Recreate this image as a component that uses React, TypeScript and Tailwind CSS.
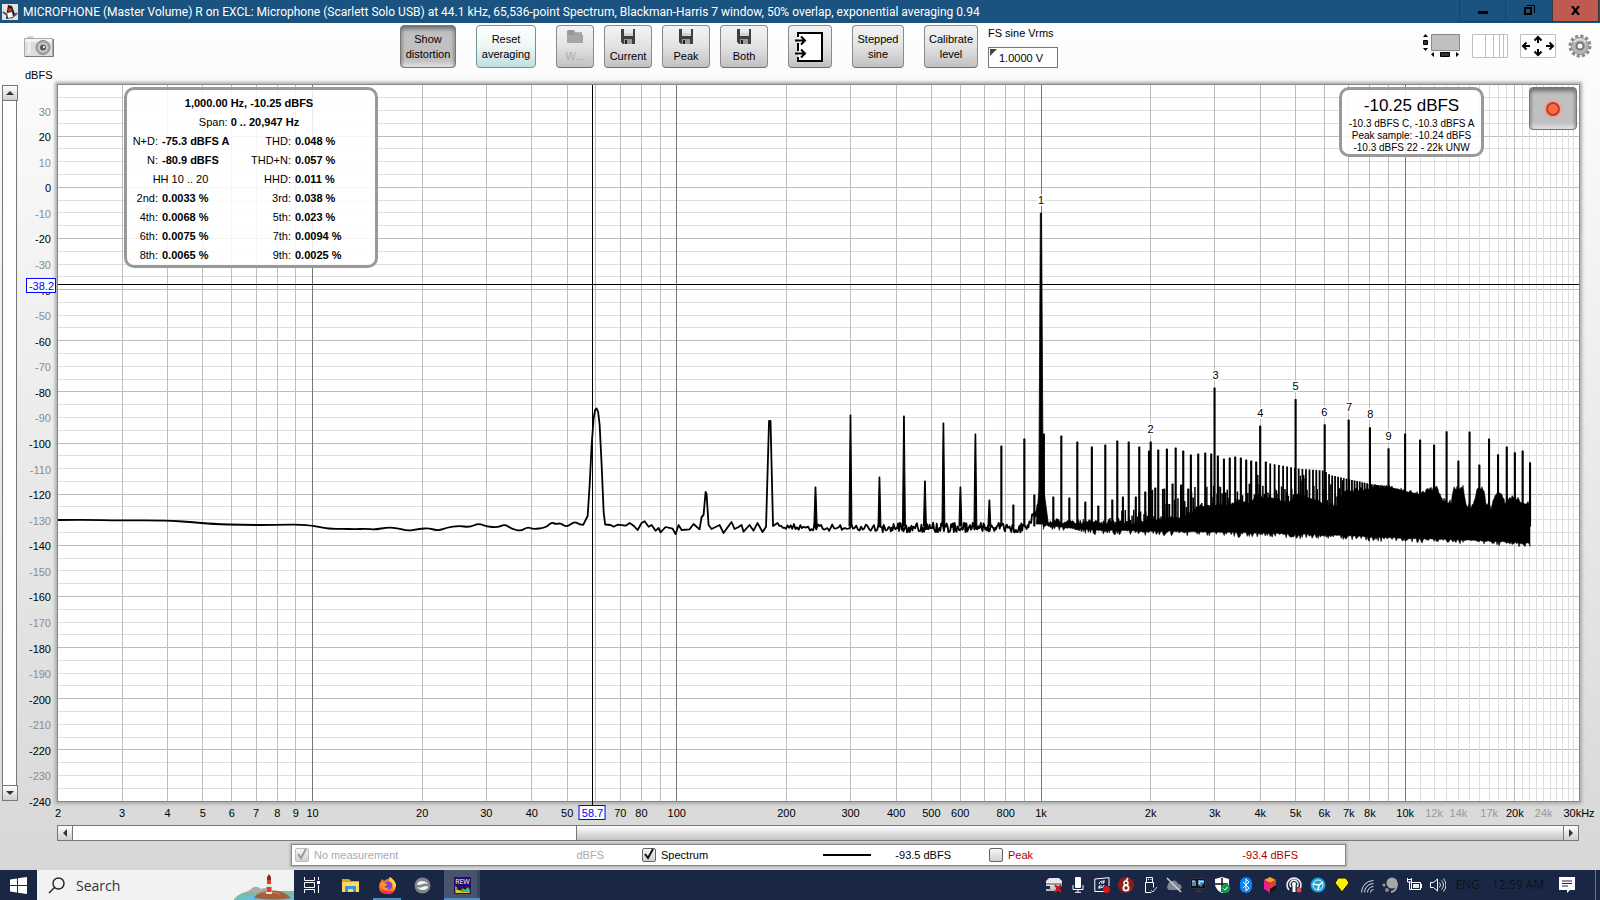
import { useState } from "react";
import type { ReactNode } from "react";

type Point = [number, number];

const F_MIN = 2;
const F_MAX = 30000;
const DB_MAX = 40;
const DB_MIN = -240;

const fx = (f: number) =>
  `${(Math.log(f / F_MIN) / Math.log(F_MAX / F_MIN)) * 100}%`;
const dy = (db: number) => `${((DB_MAX - db) / (DB_MAX - DB_MIN)) * 100}%`;

// x position in trace units for a frequency
const tx = (f: number) => 57 + 364.45 * Math.log10(f / F_MIN);

const range = (from: number, to: number, step: number) => {
  const out: number[] = [];
  for (let v = from; v <= to; v += step) out.push(v);
  return out;
};

const freqLines = [
  ...range(3, 9, 1),
  ...range(20, 90, 10),
  ...range(200, 900, 100),
  ...range(2000, 9000, 1000),
  20000,
];
const minorFreqLines = range(11000, 29000, 1000).filter((f) => f !== 20000);
const decadeLines = [10, 100, 1000, 10000];

const freqLabels: [number, string, boolean?][] = [
  [2, "2"], [3, "3"], [4, "4"], [5, "5"], [6, "6"], [7, "7"], [8, "8"],
  [9, "9"], [10, "10"], [20, "20"], [30, "30"], [40, "40"], [50, "50"],
  [70, "70"], [80, "80"], [100, "100"], [200, "200"], [300, "300"],
  [400, "400"], [500, "500"], [600, "600"], [800, "800"], [1000, "1k"],
  [2000, "2k"], [3000, "3k"], [4000, "4k"], [5000, "5k"], [6000, "6k"],
  [7000, "7k"], [8000, "8k"], [10000, "10k"], [12000, "12k", true],
  [14000, "14k", true], [17000, "17k", true], [20000, "20k"],
  [24000, "24k", true], [30000, "30kHz"],
];

const harmonics: [number, number, string][] = [
  [1000, -6.7, "1"], [2000, -96.2, "2"], [3015, -75, "3"], [4000, -90, "4"],
  [5000, -79.4, "5"], [6000, -89.6, "6"], [7015, -87.6, "7"],
  [8015, -90.2, "8"], [9000, -99, "9"],
];

const lowTrace: Point[] = [
  [57, 520], [82, 519.7], [120, 520.4], [166, 520.5], [189, 522], [212, 524],
  [243, 525], [275, 525], [304, 524.3], [323, 528], [333, 529], [342, 528.7],
  [354, 529.3], [365, 528.7], [374, 529.7], [387, 527.3], [398, 528.3],
  [407, 531], [419, 528.7], [428, 528.3], [438, 530.7], [446, 527.7],
  [458, 525.7], [469, 527.3], [478, 523.3], [486, 526.7], [497, 527.3],
  [504, 524.3], [511, 528.7], [520, 531.3], [527, 526.7], [532, 529.3],
  [545, 527.7], [551, 522], [555, 524.3], [560, 523], [566, 527.3],
  [574, 521.3], [579, 524.7], [586, 525],
];

const midTrace: Point[] = [
  [587, 516], [589, 485], [591, 445], [593, 418], [594.5, 410], [596, 408.5],
  [597.5, 412], [599, 425], [601, 465], [603, 512], [604.5, 524.5], [610, 525],
  [613, 526.7], [617, 524.7], [625, 525.7], [629, 523], [633, 525.7],
  [637, 530], [641, 523], [644, 521.3], [648, 526.7], [651, 525], [655, 530.7],
  [658, 528], [660, 532.3], [665, 527], [672, 528.7], [675, 534], [678, 525],
  [681, 530], [689, 529.3], [693, 524], [699, 529.3], [701, 517], [703, 515],
  [705, 492], [706, 494], [708, 525], [711, 529], [719, 525], [723, 533],
  [728, 526], [731, 522], [734, 529], [738, 527], [741, 525], [743, 531.7],
  [749, 525], [753, 530.7], [757, 523], [762, 532], [765.5, 526.7],
  [768.500, 421], [770, 421], [772.500, 526], [777, 523],
];

const peaks: Point[] = [
  [815, 487], [850, 415], [879, 477], [903.5, 416], [924.5, 481], [943, 423],
  [960, 487], [975, 434], [989, 500], [1001, 446], [1013, 505], [1024, 439],
  [1034, 495], [1043.5, 434], [1053, 497], [1061, 436], [1069, 498],
  [1077, 442], [1085, 502], [1091.5, 447], [1098, 506], [1105, 445],
  [1112, 500], [1117, 441], [1122.6, 497], [1128.4, 442], [1135.5, 497],
  [1139, 447], [1145, 492], [1148.7, 451], [1150.4, 442], [1155, 488],
  [1158, 450], [1164, 489], [1166.6, 449], [1172.3, 484], [1175.4, 448],
  [1180.8, 485], [1183, 451], [1188, 489], [1190.6, 455], [1198, 454],
  [1205, 453], [1211, 454], [1214.3, 388], [1217.6, 456], [1223.7, 459],
  [1229.5, 458], [1235, 457], [1240.6, 458], [1246, 460], [1251, 461],
  [1256, 462], [1260, 426], [1265.6, 462], [1295.4, 399.6], [1324.5, 424.7],
  [1348.5, 420], [1369.8, 427.7], [1388.4, 448.7], [1405, 434], [1420, 440],
  [1434, 445], [1446.5, 431.7], [1458.3, 461], [1469.5, 432], [1479.3, 465],
  [1489, 439], [1498, 454.7], [1506.7, 447], [1514.8, 452.7], [1522.6, 451],
  [1530, 462.7],
];

const combTop: Point[] = [
  [1268, 463], [1297, 468.5], [1324, 470.5], [1330, 475], [1343, 478],
  [1357, 481], [1370, 484], [1390, 487], [1405, 491], [1420, 494.5],
  [1430, 494],
];

const bodyTop: Point[] = [
  [1045, 521], [1130, 523], [1180, 518], [1200, 507], [1230, 504],
  [1250, 503], [1256, 497], [1275, 500], [1290, 502], [1297, 494],
  [1310, 500], [1320, 503], [1336, 507], [1345, 492], [1375, 487],
  [1390, 488], [1405, 492], [1420, 495], [1427, 491], [1437, 488],
  [1442, 500], [1451, 503], [1454, 489], [1463, 487], [1466, 505],
  [1473, 507], [1477, 490], [1483, 489], [1486, 503], [1491, 508],
  [1495, 495], [1500, 494], [1505, 503], [1508, 498], [1517, 498],
  [1522, 505], [1527, 503], [1531, 502],
];

const bodyBottom: Point[] = [
  [1045, 526], [1060, 528], [1100, 531], [1165, 532], [1267, 534],
  [1334, 536], [1402, 539], [1470, 541], [1531, 544],
];

const interpolate = (points: Point[], x: number) => {
  const i = points.findIndex((p) => p[0] >= x);
  if (i === -1) return points[points.length - 1][1];
  if (i === 0) return points[0][1];
  const [x0, y0] = points[i - 1];
  const [x1, y1] = points[i];
  return y0 + ((y1 - y0) * (x - x0)) / (x1 - x0);
};

const makeRandom = (seed: number) => () => {
  seed = (seed * 1664525 + 1013904223) % 4294967296;
  return seed / 4294967296;
};

const buildTraces = () => {
  const random = makeRandom(77);

  const noise: Point[] = [];
  for (let x = 779; x < 1046; x += x < 880 ? 1.6 : 0.9) {
    const spread = x < 880 ? 7 : 10;
    const skirt = x > 1025 ? Math.max(0, 22 - Math.abs(x - 1040) * 1.5) : 0;
    noise.push([x, 527.5 - skirt + (random() - 0.5) * spread]);
  }
  const toLine = (pts: Point[]) =>
    pts.map(([x, y]) => `${x.toFixed(1)} ${y.toFixed(1)}`).join("L");

  // smooth the slow left part with midpoint quadratics
  let smooth = `M${lowTrace[0].join(" ")}`;
  for (let i = 1; i < lowTrace.length - 1; i++) {
    const [x, y] = lowTrace[i];
    const [nx, ny] = lowTrace[i + 1];
    smooth += `Q${x} ${y} ${(x + nx) / 2} ${(y + ny) / 2}`;
  }
  const line = `${smooth}L${toLine(midTrace)}L${toLine(noise)}`;

  let spikes = "";
  for (const [x, y] of peaks) {
    const half = x < 820 ? 1.6 : x < 1000 ? 1.4 : 0.5;
    const width = x < 1000 ? 0.3 : 0.5;
    spikes += `M${x - half} 526L${x - width} ${y}L${x + width} ${y}L${x + half} 526Z`;
  }

  let comb = "";
  for (let f = 4260; f < 11800; f += 120) {
    const x = tx(f);
    comb += `M${x.toFixed(1)} 526V${interpolate(combTop, x).toFixed(1)}`;
  }

  let minor = "";
  for (let x = 1108; x < 1345; x += 1.7) {
    const lift = x < 1150 ? 24 : x < 1200 ? 32 : 24;
    const base = interpolate(bodyTop, x);
    minor += `M${x.toFixed(1)} 526V${(base - Math.pow(random(), 2.5) * lift).toFixed(1)}`;
  }

  const top: Point[] = [];
  const bottom: Point[] = [];
  for (let x = 1043; x <= 1530; x += 1) {
    top.push([x, interpolate(bodyTop, x) + (random() - 0.6) * 5]);
    bottom.unshift([
      x,
      interpolate(bodyBottom, x) + Math.pow(random(), 3) * 5 - 1,
    ]);
  }
  const body = `M${toLine(top)}L${toLine(bottom)}Z`;

  return { line, spikes, comb, minor, body };
};

const traces = buildTraces();

const raised =
  "rounded-[4px] border border-[#8a8a8a] border-b-[#6c6c6c] bg-linear-to-b from-[#f4f4f4] via-[#e2e2e2] to-[#c2c2c2]";
const sunken =
  "rounded-[4px] border border-[#777] bg-[#c0c0c0] shadow-[inset_0_3px_4px_#6f6f6f,inset_0_-3px_4px_#e8e8e8,inset_2px_0_2px_#999,inset_-2px_0_2px_#999]";
const frameShadow = "shadow-[0_0_0_1px_#888,0_0_3px_3px_#aaa]";

const FloppyIcon = () => (
  <svg width="16" height="16" viewBox="0 0 16 16">
    <path d="M1 0h14v15H3l-2-2z" fill="#3f3f3f" />
    <path d="M4 0h9v7H4z" fill="#cfd3d6" />
    <path d="M4 1h9M4 3h9" stroke="#fff" />
    <path d="M4 10h8v5H4z" fill="#9a9a9a" />
    <path d="M5 11h2v4H5z" fill="#222" />
  </svg>
);

const FolderIcon = () => (
  <svg width="18" height="16" viewBox="0 0 18 16">
    <path d="M1 2l1-1h6l1 2h7v10H1z" fill="#9b9b9b" />
    <path d="M1 6h16v8H1z" fill="#a6a6a6" />
    <path d="M9 4h7" stroke="#c4c4c4" />
  </svg>
);

const Toolbar = () => {
  const [vrms, setVrms] = useState("1.0000 V");
  return (
    <header className="flex h-[62px] shrink-0 items-start pt-[2px] pr-2">
      <div className="mr-[2px] flex w-1/4 shrink-0 flex-col gap-[9px] pt-[11px] pl-6">
        <button type="button" aria-label="Capture" className="w-[30px]">
          <svg width="30" height="22" viewBox="0 0 30 22">
            <path d="M4 2V1h5v1" stroke="#bbb" fill="#ddd" />
            <path d="M.5 2.5h28v18H.5z" fill="#dcdcdc" stroke="#aaa" />
            <path d="M1 3h27v3H1z" fill="#f2f2f2" />
            <path d="M1 20.500h28.500V3" stroke="#777" fill="none" />
            <path d="M3 5q4 7 0 13M6 4v14" stroke="#fafafa" fill="none" />
            <circle cx="19" cy="11.500" r="7" fill="#a5a5a5" stroke="#888" />
            <circle cx="19" cy="11.500" r="5" fill="#c9c9c9" />
            <circle cx="19" cy="11.500" r="3" fill="#555" />
            <circle cx="20" cy="11" r="1.200" fill="#cfe8d8" />
          </svg>
        </button>
        <span className="pl-px text-[11px] leading-4">dBFS</span>
      </div>
      <div className="flex h-[43px] text-[11px] leading-[15px]">
        <button type="button" className={sunken + " w-14"}>
          Show
          <br />
          distortion
        </button>
        <button
          type="button"
          className="ml-5 w-[60px] rounded-[4px] border border-[#6f9494] bg-linear-to-b from-white via-[#edf6f6] to-[#bfdfdf]"
        >
          Reset
          <br />
          averaging
        </button>
        <button
          type="button"
          disabled
          className={raised + " ml-5 flex w-[38px] flex-col items-center justify-center gap-1 text-[#aaa]"}
        >
          <FolderIcon />
          W...
        </button>
        {["Current", "Peak", "Both"].map((name) => (
          <button
            key={name}
            type="button"
            className={raised + " ml-[10px] flex w-12 flex-col items-center justify-center gap-1"}
          >
            <FloppyIcon />
            {name}
          </button>
        ))}
        <button
          type="button"
          aria-label="Input range"
          className={raised + " ml-5 flex w-11 items-center justify-center"}
        >
          <svg width="30" height="32" viewBox="0 0 30 32">
            <path d="M3 6V2h24v28H3v-4M3 12v8" fill="#fff" stroke="#000" strokeWidth="2" />
            <path d="M0 9.500h9M0 22.500h9M6 5.500l4 4-4 4M6 18.500l4 4-4 4" fill="none" stroke="#000" strokeWidth="2" />
          </svg>
        </button>
        <button type="button" className={raised + " ml-5 w-[52px]"}>
          Stepped
          <br />
          sine
        </button>
        <button type="button" className={raised + " ml-5 w-[54px]"}>
          Calibrate
          <br />
          level
        </button>
        <div className="relative ml-[10px] flex flex-col gap-[6px] pt-px">
          <label htmlFor="vrms">FS sine Vrms</label>
          <input
            id="vrms"
            value={vrms}
            onChange={(e) => setVrms(e.target.value)}
            className="h-[21px] w-[70px] border border-[#777] bg-white pl-[10px]"
          />
          <svg className="absolute top-6 left-[2px]" width="7" height="7">
            <path d="M0 0h7L0 7z" fill="#444" />
          </svg>
        </div>
      </div>
      <div className="ml-auto flex items-start gap-3 pt-2">
        <button type="button" aria-label="Scrollbars">
          <svg width="37" height="25" viewBox="0 0 37 25">
            <path d="M8.500 1.500h28v16h-28z" fill="#c0c0c0" stroke="#888" />
            <path d="M0 4l2.500-3L5 4zM0 15l2.500 3L5 15z" />
            <path d="M.5 7.500h4v4h-4zM17.500 19.500h9v4h-9z" fill="#333" stroke="#000" />
            <path d="M11 19v5l-3-2.500zM33 19v5l3-2.500z" />
          </svg>
        </button>
        <button type="button" aria-label="Frequency axis">
          <svg width="36" height="25" viewBox="0 0 36 25">
            <path d="M.5 1.500h35v23H.5z" fill="#fff" stroke="#c0c0c0" />
            <path d="M13.500 1v23M21.500 1v23M27.500 1v23M31.500 1v23" stroke="#c0c0c0" />
          </svg>
        </button>
        <button type="button" aria-label="Graph limits">
          <svg width="36" height="25" viewBox="0 0 36 25">
            <path d="M.5 1.500h35v23H.5z" fill="#fff" stroke="#c0c0c0" />
            <path
              d="M18 10V4M14.500 7.500L18 4l3.500 3.500M18 16v6M14.500 18.500L18 22l3.500-3.500M10 13H3M6.500 9.500L3 13l3.500 3.500M26 13h7M29.500 9.500L33 13l-3.500 3.500"
              fill="none"
              stroke="#000"
              strokeWidth="2"
            />
          </svg>
        </button>
        <button type="button" aria-label="Settings">
          <svg width="24" height="25" viewBox="0 0 24 25">
            <circle cx="12" cy="13" r="10" fill="none" stroke="#8a8a8a" strokeWidth="3" strokeDasharray="3.200 2.036" />
            <circle cx="12" cy="13" r="8.500" fill="#b5b5b5" stroke="#8f8f8f" />
            <path d="M6 9a8 8 0 0 1 12 0" stroke="#ddd" strokeWidth="2" fill="none" />
            <circle cx="12" cy="13" r="3.500" fill="#fafafa" stroke="#777" strokeWidth="2" />
          </svg>
        </button>
      </div>
    </header>
  );
};

const distortionRows = [
  ["N+D:", "-75.3 dBFS A", "THD:", "0.048 %"],
  ["N:", "-80.9 dBFS", "THD+N:", "0.057 %"],
  ["", "HH 10 .. 20", "HHD:", "0.011 %"],
  ["2nd:", "0.0033 %", "3rd:", "0.038 %"],
  ["4th:", "0.0068 %", "5th:", "0.023 %"],
  ["6th:", "0.0075 %", "7th:", "0.0094 %"],
  ["8th:", "0.0065 %", "9th:", "0.0025 %"],
];

const DistortionPanel = () => (
  <div className="absolute top-[2px] left-[66px] w-[254px] rounded-[10px] border-3 border-[#999] bg-white/85 pt-1 text-[11px] leading-[19px]">
    <div className="pr-1 text-center font-bold">1,000.00 Hz, -10.25 dBFS</div>
    <div className="pr-1 text-center">
      Span: <b>0 .. 20,947 Hz</b>
    </div>
    <table className="w-full table-fixed border-collapse">
      <colgroup>
        <col className="w-[31px]" />
        <col className="w-[92px]" />
        <col className="w-[41px]" />
        <col />
      </colgroup>
      <tbody>
        {distortionRows.map(([a, b, c, d]) => (
          <tr key={c}>
            {a ? (
              <>
                <td className="text-right">{a}</td>
                <td className="pl-1 font-bold whitespace-nowrap">{b}</td>
              </>
            ) : (
              <td colSpan={2} className="pr-4 text-center">
                {b}
              </td>
            )}
            <td className="text-right whitespace-nowrap">{c}</td>
            <td className="pl-1 font-bold">{d}</td>
          </tr>
        ))}
      </tbody>
    </table>
  </div>
);

const LevelPanel = () => (
  <div className="absolute top-[2px] right-[95px] w-[145px] rounded-[10px] border-3 border-[#999] bg-white/85 pt-1 text-center text-[10px] leading-3 whitespace-nowrap">
    <div className="text-[17px] leading-6">-10.25 dBFS</div>
    <div>-10.3 dBFS C, -10.3 dBFS A</div>
    <div>Peak sample: -10.24 dBFS</div>
    <div>-10.3 dBFS 22 - 22k UNW</div>
  </div>
);

const Grid = () => (
  <g shapeRendering="crispEdges">
    {range(-235, 35, 5).map((db) => (
      <line
        key={db}
        x1="0"
        x2="100%"
        y1={dy(db)}
        y2={dy(db)}
        stroke={db % 20 === 0 ? "#bdbdbd" : "#dedede"}
      />
    ))}
    {minorFreqLines.map((f) => (
      <line key={f} x1={fx(f)} x2={fx(f)} y1="0" y2="100%" stroke="#dedede" />
    ))}
    {freqLines.map((f) => (
      <line key={f} x1={fx(f)} x2={fx(f)} y1="0" y2="100%" stroke="#bdbdbd" />
    ))}
    {decadeLines.map((f) => (
      <line key={f} x1={fx(f)} x2={fx(f)} y1="0" y2="100%" stroke="#777" />
    ))}
  </g>
);

const SpectrumChart = () => (
  <svg
    className="absolute inset-0 h-full w-full overflow-visible text-[11px]"
    role="img"
    aria-label="Spectrum"
  >
    <Grid />
    {range(-240, 30, 10).map((db) => (
      <text
        key={db}
        x="-7"
        y={dy(db)}
        dy="5"
        textAnchor="end"
        fill={db % 20 === 0 ? "#000" : "#8c8c8c"}
      >
        {db}
      </text>
    ))}
    {freqLabels.map(([f, label, faint]) => (
      <text
        key={f}
        x={fx(f)}
        y="100%"
        dy="16"
        textAnchor="middle"
        fill={faint ? "#999" : "#000"}
      >
        {label}
      </text>
    ))}
    <svg
      width="100%"
      height="100%"
      viewBox="57 85 1522 716"
      preserveAspectRatio="none"
      fill="none"
      stroke="#000"
      strokeLinejoin="round"
    >
      <path d={traces.line} strokeWidth="1.8" />
      <path d={traces.body} fill="#000" strokeWidth="0.5" />
      <path d={traces.minor} strokeWidth="1.5" />
      <path d={traces.comb} strokeWidth="1.8" />
      <path d={traces.spikes} fill="#000" strokeWidth="1.1" />
      <path
        d="M1036 524L1038.500 490L1040 213H1041.200L1042.500 434L1043.500 490L1048 524Z"
        fill="#000"
        strokeWidth="0.8"
      />
    </svg>
    {harmonics.map(([f, db, label]) => (
      <text
        key={label}
        x={fx(f)}
        y={dy(db)}
        textAnchor="middle"
        stroke="#fff"
        strokeWidth="3"
        paintOrder="stroke"
      >
        {label}
      </text>
    ))}
    <g shapeRendering="crispEdges" stroke="#000">
      <line x1={fx(58.7)} x2={fx(58.7)} y1="0" y2="100%" />
      <line x1="0" x2="100%" y1={dy(-38.2)} y2={dy(-38.2)} />
    </g>
    <svg x="0" y={dy(-38.2)} className="overflow-visible">
      <rect x="-31.500" y="-6.500" width="29" height="14" fill="#fff" stroke="#00f" />
      <text x="-4" y="5" textAnchor="end" fill="#00f">
        -38.2
      </text>
    </svg>
    <svg x={fx(58.7)} y="100%" className="overflow-visible">
      <line y1="0" y2="4" stroke="#000" shapeRendering="crispEdges" />
      <rect x="-13.500" y="4.500" width="26" height="14" fill="#fff" stroke="#00f" />
      <text x="0" y="16" textAnchor="middle" fill="#00f">
        58.7
      </text>
    </svg>
  </svg>
);

const ArrowButton = ({ label, d }: { label: string; d: string }) => (
  <button
    type="button"
    aria-label={label}
    className="flex h-[14px] w-[14px] shrink-0 items-center justify-center bg-linear-to-b from-white to-[#cfcfcf] outline outline-[#777]"
  >
    <svg width="8" height="8" viewBox="0 0 8 8">
      <path d={d} fill="#333" />
    </svg>
  </button>
);

type LegendItemProps = {
  name: string;
  value: string;
  color?: string;
  line?: boolean;
  disabled?: boolean;
  initial?: boolean;
};

const LegendItem = ({ name, value, color = "text-black", line, disabled, initial = false }: LegendItemProps) => {
  const [checked, setChecked] = useState(initial);
  return (
    <div className={"flex items-center pr-[38px] " + color}>
      <label className="relative flex items-center gap-[5px]">
        <input
          type="checkbox"
          checked={checked}
          disabled={disabled}
          onChange={(e) => setChecked(e.target.checked)}
          className="h-[14px] w-[14px] appearance-none rounded-[2px] border border-[#666] bg-linear-to-b from-[#f6f6f6] to-[#d0d0d0] disabled:border-[#bbb]"
        />
        {checked && (
          <svg className="absolute left-0" width="14" height="14" viewBox="0 0 14 14">
            <path d="M3 6l3 4 5-9" fill="none" stroke={disabled ? "#999" : "#111"} strokeWidth="2" />
          </svg>
        )}
        {name}
      </label>
      {line && <span className="ml-auto h-[2px] w-12 bg-black" />}
      <span className={line ? "ml-6" : "ml-auto"}>{value}</span>
    </div>
  );
};

const TrayIcon = ({ label, children }: { label: string; children: ReactNode }) => (
  <button type="button" aria-label={label} className="shrink-0">
    <svg width="16" height="16" viewBox="0 0 16 16" fill="none">
      {children}
    </svg>
  </button>
);

const Tray = () => (
  <div className="ml-auto flex items-center gap-2 text-[12px] text-[#0a1222]">
    <TrayIcon label="Drive">
      <path d="M3 1h10l3 3v5H0V4z" fill="#e8e8e8" />
      <path d="M0 6h16v2H0z" fill="#999" />
      <path d="M4 9h6v5H4z" fill="#ccc" />
      <path d="M0 13h10" stroke="#bbb" strokeWidth="2" />
      <path d="M9 8l6 7M15 8l-6 7" stroke="#d8151b" strokeWidth="2.200" />
    </TrayIcon>
    <TrayIcon label="Microphone">
      <rect x="5" width="6" height="11" rx="1" fill="#fff" />
      <path d="M3 8v4.500h10V8M8 12.500V15M5 15.300h6" stroke="#fff" />
    </TrayIcon>
    <TrayIcon label="Sync">
      <path d="M10 14.500H.8V2L15 .7V9" stroke="#fff" />
      <path d="M5 7a3 3 0 0 1 5-2M10 3v3H7M10 8a3 3 0 0 1-5 2M5 12V9h3" stroke="#fff" />
      <circle cx="12.500" cy="12.500" r="3.500" fill="#e0141c" />
    </TrayIcon>
    <TrayIcon label="Audio engine">
      <circle cx="8" cy="8" r="8" fill="#8c1d18" />
      <circle cx="8" cy="11" r="2.600" stroke="#fff" strokeWidth="1.800" />
      <circle cx="8" cy="6" r="2" stroke="#fff" strokeWidth="1.500" />
      <path d="M8 4l2-3" stroke="#fff" strokeWidth="1.500" />
    </TrayIcon>
    <TrayIcon label="USB">
      <path d="M4.500 5.500v-5h6v5M3.500 15.500h6M3.500 15.500v-10h8v5" stroke="#fff" />
      <path d="M6 2.500h1M8.500 2.500h1" stroke="#fff" />
      <path d="M9 13l2 2 4-5" stroke="#ccc" />
    </TrayIcon>
    <TrayIcon label="Cloud">
      <path d="M3 13a3 3 0 0 1-1-5 3 3 0 0 1 3-3 4 4 0 0 1 7 2 3 3 0 0 1 1 6z" fill="#7d8797" />
      <path d="M1 1l14 14" stroke="#d0d4da" strokeWidth="1.500" />
    </TrayIcon>
    <TrayIcon label="Display">
      <path d="M.5 1.500h15v10H.5z" fill="#111" stroke="#333" />
      <path d="M2 9V4h4v5zM8 8l1-5h5v3l-3 4z" fill="#3f8fd0" />
      <path d="M2 4h3M9 3v4l2-3 3 1" stroke="#d8eefc" />
      <path d="M5 14.500h8M9 12v3" stroke="#333" strokeWidth="2" />
    </TrayIcon>
    <TrayIcon label="Security">
      <path d="M8 0l7 2v6q-1 5-7 8-6-3-7-8V2z" fill="#fff" />
      <path d="M8 1v14M1 7h13" stroke="#111" strokeWidth="1.500" />
      <circle cx="11.500" cy="11.500" r="4.500" fill="#159a4b" />
      <path d="M9.500 11.500l1.500 1.500 2.500-3" stroke="#fff" />
    </TrayIcon>
    <TrayIcon label="Bluetooth">
      <rect x="2" width="12" height="16" rx="6" fill="#0a84f5" />
      <path d="M5 5l6 6-3 3V2l3 3-6 6" stroke="#fff" />
    </TrayIcon>
    <TrayIcon label="Package">
      <path d="M8 0l6 3v9l-6 4-6-4V3z" fill="#111" />
      <path d="M8 0l6 3-6 3-6-3z" fill="#f6a21c" />
      <path d="M2 3l6 3v10l-6-4z" fill="#e8208c" />
      <path d="M8 6l6-3v5l-6 4z" fill="#e63a3a" />
    </TrayIcon>
    <TrayIcon label="Broadcast">
      <path d="M3 13a7 7 0 1 1 10 0M5 10a4 4 0 1 1 6 0" stroke="#eee" strokeWidth="1.600" />
      <circle cx="8" cy="7" r="2" fill="#fff" />
      <path d="M8 8v7" stroke="#fff" strokeWidth="3" />
      <circle cx="13" cy="13" r="2.500" fill="#e0493b" />
    </TrayIcon>
    <TrayIcon label="Browser">
      <circle cx="8" cy="8" r="7.500" fill="#1e9fd8" />
      <circle cx="8" cy="8" r="5" stroke="#dff3fb" />
      <path d="M3 7l6 1 4-3M9 8l-1 5" stroke="#fff" strokeWidth="1.500" />
    </TrayIcon>
    <TrayIcon label="Notes">
      <path d="M4 1h8l3 5-7 9-7-9z" fill="#ffef00" stroke="#111" />
    </TrayIcon>
    <TrayIcon label="Wi-Fi">
      <path d="M3.500 15.500A12 12 0 0 1 15.500 3.500M6.500 15.500a9 9 0 0 1 9-9M9.500 15.500a6 6 0 0 1 6-6M12.500 15.500a3 3 0 0 1 3-3" stroke="#d5dae2" />
    </TrayIcon>
    <TrayIcon label="Meter">
      <circle cx="10" cy="6" r="5.500" fill="#a7a7a7" />
      <path d="M15 6q0 8-6 9" stroke="#a7a7a7" strokeWidth="2" />
      <circle cx="2" cy="8" r="1.500" fill="#999" />
      <circle cx="5" cy="13" r="2" fill="#888" />
    </TrayIcon>
    <TrayIcon label="Battery">
      <path d="M5.500 5.500h9v7h-9z" stroke="#fff" />
      <path d="M7 7h6v4H7z" fill="#e8e8e8" />
      <path d="M15.500 7v4M1 2.500h5M1.500 1v4h4V1M3.500 5v7.500h2" stroke="#fff" />
    </TrayIcon>
    <TrayIcon label="Volume">
      <path d="M.5 5.500h3l4-3.500v12l-4-3.500h-3z" stroke="#fff" />
      <path d="M9.500 5.500q2 2.500 0 5M11.500 3.500q4 4.500 0 9M13.500 1.500q5 6.500 0 13" stroke="#ddd" />
    </TrayIcon>
    <span className="ml-px">ENG</span>
    <span className="ml-1">12:59 AM</span>
    <button type="button" aria-label="Notifications" className="ml-[6px]">
      <svg width="18" height="16" viewBox="0 0 18 16">
        <path d="M1 0h16v13h-5l-3 3v-3H1z" fill="#fff" />
        <path d="M4 4h10M4 6.500h10M4 9h6" stroke="#1a2744" />
      </svg>
    </button>
    <span className="ml-[11px] h-[30px] w-[5px] border-l border-[#6c7789]" />
  </div>
);

const Taskbar = () => (
  <footer className="flex h-[30px] shrink-0 items-stretch bg-[#1a2744] font-['Open_Sans',sans-serif]">
    <button type="button" aria-label="Start" className="flex w-[37px] items-center justify-center">
      <svg width="17" height="17" viewBox="0 0 17 17" fill="#fff">
        <path d="M0 2.500L7 1.500V8H0zM8 1.300L17 0v8H8zM0 9h7v6.500L0 14.500zM8 9h9v8l-9-1.300z" />
      </svg>
    </button>
    <div className="relative flex w-[257px] items-center bg-[#f2f2f2]">
      <svg className="absolute left-[11px]" width="17" height="17" viewBox="0 0 17 17" fill="none" stroke="#222">
        <circle cx="10.500" cy="6.500" r="5.500" strokeWidth="1.400" />
        <path d="M6.500 10.500L1 16" strokeWidth="1.400" />
      </svg>
      <input
        aria-label="Search"
        placeholder="Search"
        className="h-full w-full bg-transparent pl-[39px] text-[14px] placeholder:text-[#333]"
      />
      <svg className="absolute right-0 bottom-0" width="60" height="26" viewBox="0 0 60 26">
        <path d="M0 25q6-7 18-8h42v9H0z" fill="#7fb9a4" />
        <path d="M8 19q8-2 10-5 5-3 9 1 6-3 9 3z" fill="#a9adb0" />
        <path d="M0 26q14-6 30-4l30 1v3z" fill="#63c3dc" />
        <path d="M20 24q4-7 14-7 10-2 18 3l5 4q-16 3-37 0z" fill="#a4603c" />
        <path d="M24 20q10-4 22 0" stroke="#c98257" fill="none" />
        <path d="M33 6h4l1 14h-6z" fill="#e8e4df" />
        <path d="M33 6h4v4h-4zM32.500 13h5v5h-5z" fill="#d6402c" />
        <path d="M33 3l2-3 2 3v3h-4z" fill="#8a2c1e" />
      </svg>
    </div>
    <button type="button" aria-label="Task view" className="flex w-9 items-center justify-center">
      <svg width="17" height="16" viewBox="0 0 17 16" fill="none" stroke="#fff">
        <path d="M.5 0v3.500h10V0M.5 5.500h10v5H.5zM.5 16v-3.500h10V16M14.500 0v3M14.500 8v8" />
        <path d="M13 4h3v3h-3z" fill="#fff" stroke="none" />
      </svg>
    </button>
    <button type="button" aria-label="File explorer" className="flex w-10 items-center justify-center">
      <svg width="17" height="15" viewBox="0 0 17 15">
        <path d="M0 1h7l2 2h8v11H0z" fill="#e0a21a" />
        <path d="M0 4h17v10H0z" fill="#ffd765" />
        <path d="M3 14V8h11v6h-3v-3H6v3z" fill="#3b95d9" />
      </svg>
    </button>
    <button
      type="button"
      aria-label="Firefox"
      className="ml-[3px] flex w-[28px] items-center justify-center border-b-2 border-[#4d8fc4] pt-[2px]"
    >
      <svg width="17" height="17" viewBox="0 0 17 17">
        <path d="M2 4l1-2 2 2q2-2 4-2l2-2q5 3 6 8 0 9-8.500 9T0 9q0-3 2-5z" fill="#ff7a1c" />
        <path d="M11 0q6 4 6 9l-3 4q1-7-4-9z" fill="#ffd23a" />
        <path d="M1 11q2 6 8 6 5 0 7-4-7 4-15-2z" fill="#f0295c" />
        <circle cx="9" cy="8.500" r="4" fill="#7a45d8" />
        <path d="M2 6q5-1 6 2l-3 2q3 2 5 0-2 5-7 2z" fill="#ff9a26" />
      </svg>
    </button>
    <button type="button" aria-label="Audio tool" className="flex w-[43px] items-center justify-center">
      <svg width="17" height="17" viewBox="0 0 17 17">
        <circle cx="8.500" cy="8.500" r="8" fill="#7c8488" />
        <path d="M3 8q0-4 5-4 4 0 6 3-4-1-5 0-2 1-6 1zM14 9q0 4-5 4-4 0-6-3 4 1 5 0 2-1 6-1z" fill="#f2f2f2" />
      </svg>
    </button>
    <button
      type="button"
      aria-label="REW"
      className="flex w-9 items-center justify-center border-b-2 border-[#4d8fc4] bg-[#48536d] pt-[2px] shadow-[inset_-3px_0_0_#38445c]"
    >
      <svg width="17" height="17" viewBox="0 0 17 17">
        <path d="M0 0h17v17H0z" fill="#2c0a6b" />
        <text x="8.500" y="7" fontSize="7" fill="#fff" textAnchor="middle">
          REW
        </text>
        <path d="M1 16V9l2 1 1 4 3-1 2-2 2 2 3-3 2 3v3z" fill="#2fc42f" />
        <path d="M2 16v-3h3l3 2h7v1z" fill="#f0c020" />
        <path d="M10 14l3-2 2 2" stroke="#24c8e8" fill="none" />
      </svg>
    </button>
    <Tray />
  </footer>
);

const TitleBar = () => (
  <div className="flex h-[23px] shrink-0 items-center bg-[#1a5280] pl-[2px] font-[Roboto,sans-serif] text-[12px] text-white">
    <svg className="shrink-0" width="16" height="16" viewBox="0 0 16 16">
      <path d="M0 0h16v16H0z" fill="#e4e4e4" />
      <path d="M6 1l4 1 3 8-2 4-7 1 1-8z" fill="#222" />
      <path d="M5 9l5-1 1 5-5 1z" fill="#fff" />
      <circle cx="8" cy="6" r="2" fill="#e2231a" />
      <path d="M1 8l4 3M15 9l-3 3" stroke="#555" strokeWidth="2" />
    </svg>
    <h1 className="truncate pl-[5px]">
      MICROPHONE (Master Volume) R on EXCL: Microphone (Scarlett Solo USB) at
      44.1 kHz, 65,536-point Spectrum, Blackman-Harris 7 window, 50% overlap,
      exponential averaging 0.94
    </h1>
    <div className="ml-auto flex h-[22px] shrink-0 self-start pr-[1px]">
      <button
        type="button"
        aria-label="Minimize"
        className="flex w-[47px] items-center justify-center border border-t-0 border-[#3a3a3a]"
      >
        <span className="mt-1 h-[3px] w-[10px] bg-black" />
      </button>
      <button
        type="button"
        aria-label="Restore"
        className="flex w-[46px] items-center justify-center border-b border-[#3a3a3a]"
      >
        <svg width="11" height="11" viewBox="0 0 11 11" fill="none" stroke="#000">
          <path d="M1 3h6v6H1z" strokeWidth="2" />
          <path d="M3 .5h7.500V8" />
        </svg>
      </button>
      <button
        type="button"
        aria-label="Close"
        className="flex w-[47px] items-center justify-center border border-t-0 border-[#3a3a3a] bg-[#c0594f]"
      >
        <svg width="9" height="9" viewBox="0 0 9 9">
          <path d="M1 0l7 9M8 0L1 9" stroke="#000" strokeWidth="2.200" />
        </svg>
      </button>
    </div>
  </div>
);

const App = () => (
  <div className="flex h-screen flex-col overflow-hidden bg-linear-to-b from-white to-[#d6d6d6] font-['Liberation_Sans',Arial,sans-serif] text-black">
    <TitleBar />
    <Toolbar />
    <main className="flex min-h-0 flex-1 flex-col">
      <div className="flex min-h-0 flex-1 pr-[21px] pl-[2px]">
        <div className="mr-[41px] flex w-[15px] flex-col justify-between border border-[#777] bg-white">
          <ArrowButton label="Scroll up" d="M0 6l4-4 4 4z" />
          <ArrowButton label="Scroll down" d="M0 2l4 4 4-4z" />
        </div>
        <div className={"relative flex-1 bg-white " + frameShadow}>
          <SpectrumChart />
          <DistortionPanel />
          <LevelPanel />
          <button
            type="button"
            aria-label="Record"
            className={sunken + " absolute top-[2px] right-[2px] flex h-[43px] w-12 items-center justify-center"}
          >
            <span className="h-[14px] w-[14px] rounded-full border-2 border-[#c0392b] bg-[#ff6a45] shadow-[0_0_3px_1px_#ff9080]" />
          </button>
        </div>
      </div>
      <div className="mt-6 mr-[21px] ml-[57px] flex h-4 shrink-0 border border-[#777] bg-white">
        <ArrowButton label="Scroll left" d="M6 0L2 4l4 4z" />
        <div className="flex-1" />
        <div className="w-[65%] border-x border-[#777] bg-linear-to-b from-white to-[#c4c4c4]" />
        <ArrowButton label="Scroll right" d="M2 0l4 4-4 4z" />
      </div>
      <div className="mt-1 mr-[255px] mb-[5px] ml-[292px] grid h-[20px] shrink-0 grid-cols-3 bg-white pr-[9px] pl-[3px] text-[11px] shadow-[0_0_0_1px_#888,0_0_2px_2px_#aaa]">
        <LegendItem name="No measurement" value="dBFS" color="text-[#aaa]" disabled initial />
        <LegendItem name="Spectrum" value="-93.5 dBFS" line initial />
        <LegendItem name="Peak" value="-93.4 dBFS" color="text-[#a80000]" />
      </div>
    </main>
    <Taskbar />
  </div>
);

export default App;
